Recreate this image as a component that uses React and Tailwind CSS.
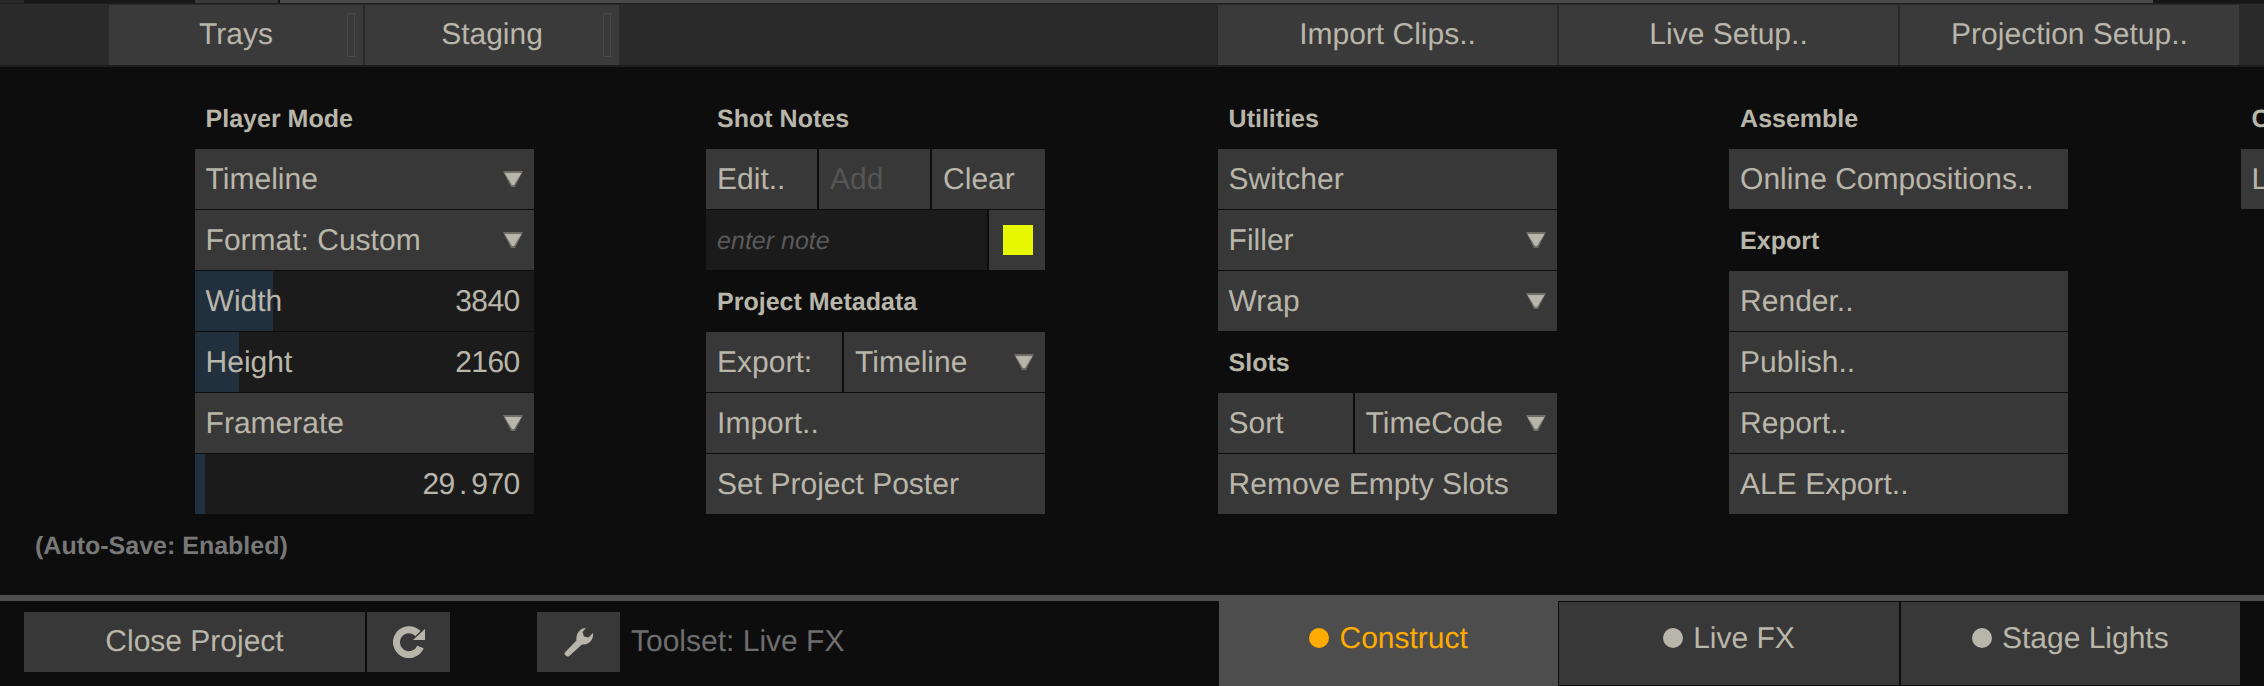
import React from "react";

const Arrow = () => (
  <svg width="20" height="16" viewBox="0 0 20 16" className="shrink-0">
    <polygon points="0,0 20,0 12,16 8,16" fill="#6e6d66" />
    <polygon points="1.5,2 18.5,2 11,14 9,14" fill="#b8b6aa" />
  </svg>
);

const ReloadIcon = () => (
  <svg width="32" height="32" viewBox="0 0 32 32">
    <path d="M25 7.5A12.5 12.5 0 1 0 27.5 21" fill="none" stroke="#b8b6aa" strokeWidth="7" />
    <polygon points="32,3 32,14 20,14" fill="#b8b6aa" />
  </svg>
);

const WrenchIcon = () => (
  <svg width="30" height="30" viewBox="0 0 30 30">
    <path
      d="M0.8 25.5L12.5 13.5C11.5 7 16 1 22 1L18.5 5L20 9.5L24.5 10.5L29 6C30 12 25 18.5 18 17.5L5 29.2C3 30.5-0.5 27.5 0.8 25.5Z"
      fill="#b8b6aa"
    />
  </svg>
);

const Header = ({ children }) => (
  <div className="h-[60px] flex items-center px-[11px] pt-[4px] text-[25px] font-bold">{children}</div>
);

const Btn = ({ children, className = "" }) => (
  <div className={`h-[60px] bg-[#383838] flex items-center px-[11px] whitespace-nowrap ${className}`}>
    {children}
  </div>
);

const Select = ({ children, className = "" }) => (
  <Btn className={`justify-between ${className}`}>
    <span>{children}</span>
    <Arrow />
  </Btn>
);

// number field with the blue level behind it
const Slider = ({ label, value, fill }) => (
  <div className="h-[60px] bg-[#1b1b1b] relative flex items-center justify-between pl-[11px] pr-[14px]">
    <div className="absolute left-0 top-0 bottom-0 bg-[#22303d]" style={{ width: fill }} />
    <span className="relative">{label}</span>
    <span className="relative tracking-[-0.6px]">{value}</span>
  </div>
);

const Column = ({ children }) => <div className="w-[339px] shrink-0 flex flex-col gap-px">{children}</div>;

const TopBtn = ({ children, notch }) => (
  <div className={`relative h-[60px] pb-[2px] bg-[#3a3a3a] flex items-center justify-center ${notch ? "w-[254px]" : "w-[339px]"}`}>
    {children}
    {notch && <div className="absolute right-[8px] top-[8px] w-[8px] h-[44px] border border-[#484848]" />}
  </div>
);

const Tab = ({ label, active }) => (
  <div
    className={`h-full flex-1 flex items-center justify-center gap-[10px] pb-[11px] ${
      active ? "bg-[#4d4d4d] text-[#ffab00]" : "bg-[#383838] border border-[#0d0d0d]"
    }`}
  >
    <span className={`w-[20px] h-[20px] rounded-full ${active ? "bg-[#ffab00]" : "bg-[#b8b6aa]"}`} />
    {label}
  </div>
);

export default function App() {
  return (
    <div className="w-[2264px] h-[686px] overflow-hidden flex flex-col bg-[#0d0d0d] text-[#b8b6aa] text-[30px] [text-rendering:geometricPrecision] font-['Liberation_Sans',Arial,sans-serif]">
      {/* strip of the panel above */}
      <div className="h-[4px] flex border-b border-[#1e1e1e] bg-[#161616]">
        <div className="w-[24px] bg-[#2a2a2a]" />
        <div className="w-[169px] bg-[#181818] mr-[2px]" />
        <div className="w-[83px] bg-[#3a3a3a] mr-[2px]" />
        <div className="w-[1873px] bg-[#4a4a4a]" />
      </div>

      <div className="h-[63px] flex justify-between pt-px pl-[109px] pr-[25px] bg-[#2a2a2a] border-b-2 border-[#1e1e1e]">
        <div className="flex gap-[2px]">
          <TopBtn notch>Trays</TopBtn>
          <TopBtn notch>Staging</TopBtn>
        </div>
        <div className="flex gap-[2px]">
          <TopBtn>Import Clips..</TopBtn>
          <TopBtn>Live Setup..</TopBtn>
          <TopBtn>Projection Setup..</TopBtn>
        </div>
      </div>

      <div className="h-[528px] flex flex-col pt-[21px]">
        <div className="flex gap-[172.5px] pl-[194.6px]">
          <Column>
            <Header>Player Mode</Header>
            <Select>Timeline</Select>
            <Select>Format: Custom</Select>
            <Slider label="Width" value="3840" fill="78px" />
            <Slider label="Height" value="2160" fill="44px" />
            <Select>Framerate</Select>
            <Slider
              value={
                <>
                  29<span className="mx-[4.5px]">.</span>970
                </>
              }
              fill="10px"
            />
          </Column>

          <Column>
            <Header>Shot Notes</Header>
            <div className="flex gap-[2px]">
              <Btn className="w-[111px]">Edit..</Btn>
              <Btn className="w-[111px] text-[#555555]">Add</Btn>
              <Btn className="w-[113px]">Clear</Btn>
            </div>
            <div className="flex gap-[2px]">
              <div className="flex-1 h-[60px] bg-[#1b1b1b] flex items-center px-[11px] pt-[3px] text-[25px] italic text-[#5a5a5a]">
                enter note
              </div>
              <div className="w-[56px] h-[60px] bg-[#383838] flex items-center justify-center pl-[2px]">
                <div className="w-[30px] h-[30px] bg-[#e6f700]" />
              </div>
            </div>
            <Header>Project Metadata</Header>
            <div className="flex gap-[2px]">
              <Btn className="w-[136px]">Export:</Btn>
              <Select className="flex-1">Timeline</Select>
            </div>
            <Btn>Import..</Btn>
            <Btn>Set Project Poster</Btn>
          </Column>

          <Column>
            <Header>Utilities</Header>
            <Btn>Switcher</Btn>
            <Select>Filler</Select>
            <Select>Wrap</Select>
            <Header>Slots</Header>
            <div className="flex gap-[2px]">
              <Btn className="w-[135px]">Sort</Btn>
              <Select className="flex-1">TimeCode</Select>
            </div>
            <Btn>Remove Empty Slots</Btn>
          </Column>

          <Column>
            <Header>Assemble</Header>
            <Btn>Online Compositions..</Btn>
            <Header>Export</Header>
            <Btn>Render..</Btn>
            <Btn>Publish..</Btn>
            <Btn>Report..</Btn>
            <Btn>ALE Export..</Btn>
          </Column>

          {/* cut off by the window edge */}
          <Column>
            <Header>C</Header>
            <Btn>L</Btn>
          </Column>
        </div>

        <div className="mt-[17px] pl-[35px] text-[25px] leading-[30px] font-bold text-[#787878]">
          (Auto-Save: Enabled)
        </div>
      </div>

      <div className="h-[6px] bg-[#4d4d4d]" />

      <div className="flex-1 flex">
        <div className="w-[1219px] flex items-start pt-[11px] pl-[24px]">
          <div className="w-[341px] h-[60px] pb-px bg-[#383838] flex items-center justify-center">Close Project</div>
          <div className="w-[83px] h-[60px] ml-[2px] bg-[#383838] flex items-center justify-center">
            <ReloadIcon />
          </div>
          <div className="w-[83px] h-[60px] ml-[87px] bg-[#383838] flex items-center justify-center">
            <WrenchIcon />
          </div>
          <div className="h-[60px] ml-[11px] pb-px flex items-center text-[#6e6e6e]">Toolset: Live FX</div>
        </div>
        <div className="w-[1022px] flex">
          <Tab label="Construct" active />
          <Tab label="Live FX" />
          <Tab label="Stage Lights" />
        </div>
      </div>
    </div>
  );
}
